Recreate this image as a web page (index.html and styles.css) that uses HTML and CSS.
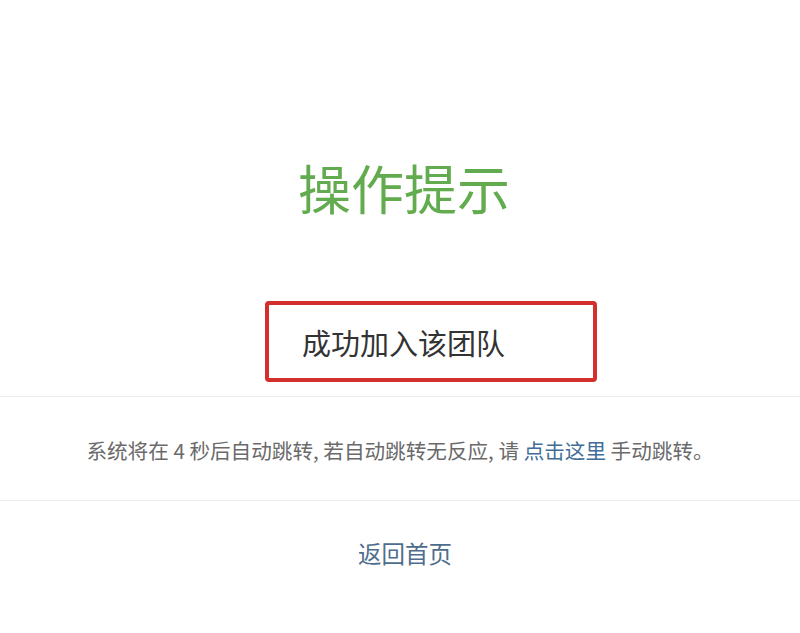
FILE: index.html
```html
<!DOCTYPE html>
<html lang="zh-CN">
<head>
<meta charset="utf-8">
<title>操作提示</title>
<link rel="stylesheet" href="styles.css">
</head>
<body>
<div class="page">
  <h1 class="title">操作提示</h1>
  <div class="notice">成功加入该团队</div>
  <div class="redirect">系统将在 4 秒后自动跳转, 若自动跳转无反应, 请 <a class="link" href="#">点击这里</a> 手动跳转。</div>
  <div class="home"><a class="home-link" href="#">返回首页</a></div>
</div>
</body>
</html>
```
FILE: styles.css
```css
html, body {
  margin: 0;
  padding: 0;
  background: #ffffff;
}
.page {
  font-family: "Noto Sans CJK SC", "Noto Sans", sans-serif;
  display: flex;
  flex-direction: column;
}
.title {
  margin: 0;
  padding-top: 161px;
  font-size: 53px;
  line-height: 53px;
  font-weight: 400;
  color: #62ab4e;
  text-align: center;
  padding-left: 8px;
}
.notice {
  margin: 87px 0 14px 265px;
  width: 332px;
  height: 81px;
  box-sizing: border-box;
  border: 4px solid #d3302d;
  border-radius: 4px;
  padding-left: 33px;
  display: flex;
  align-items: center;
  font-size: 29px;
  color: #333333;
}
.redirect {
  border-top: 1px solid #ebebeb;
  border-bottom: 1px solid #ebebeb;
  height: 105px;
  box-sizing: border-box;
  padding-top: 41px;
  font-size: 20.6px;
  line-height: 24px;
  color: #6a6a6a;
  text-align: center;
}
.link {
  color: #3f6d97;
  text-decoration: none;
}
.home {
  padding-top: 37px;
  text-align: center;
  font-size: 23.5px;
  line-height: 30px;
  padding-left: 10px;
}
.home-link {
  color: #4e6d8d;
  text-decoration: none;
}
```
